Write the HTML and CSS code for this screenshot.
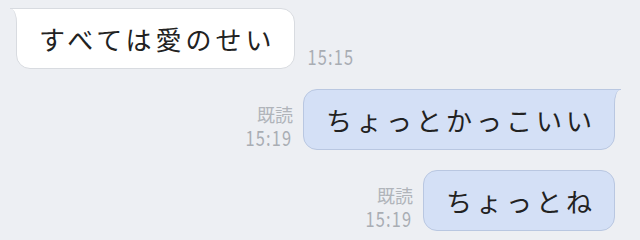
FILE: index.html
```html
<!DOCTYPE html>
<html>
<head>
    <meta charset="utf-8">
    <title>トーク</title>
    <link rel="stylesheet" href="styles.css">
</head>
<body>
    <div class="chat">
        <div class="row row-in">
            <div class="bubble bubble-in tail-left">すべては愛のせい</div>
            <div class="meta">
                <div class="time">15:15</div>
            </div>
        </div>
        <div class="row row-out">
            <div class="meta meta-out">
                <div class="read">既読</div>
                <div class="time">15:19</div>
            </div>
            <div class="bubble bubble-out tail-right">ちょっとかっこいい</div>
        </div>
        <div class="row row-out">
            <div class="meta meta-out">
                <div class="read">既読</div>
                <div class="time">15:19</div>
            </div>
            <div class="bubble bubble-out">ちょっとね</div>
        </div>
    </div>
</body>
</html>
```

FILE: styles.css
```css
body {
    margin: 0;
    background-color: #edeff3;
    font-family: "Noto Sans CJK JP", "Noto Sans", sans-serif;
}

.chat {
    display: flex;
    flex-direction: column;
    gap: 20px;
    padding: 8px 25px 0 16px;
}

.row {
    display: flex;
    align-items: flex-end;
    gap: 12px;
}

.row-out {
    justify-content: flex-end;
    gap: 10px;
}

.bubble {
    position: relative;
    height: 61px;
    line-height: 59px;
    padding: 0 18px 0 22px;
    font-size: 26px;
    letter-spacing: 4px;
    color: #222;
    border-radius: 14px;
    box-sizing: border-box;
    white-space: nowrap;
}

.bubble-in {
    background-color: #fff;
    border: 1px solid #d8dbe0;
    border-top-left-radius: 0;
}

.bubble-out {
    background-color: #d4e0f6;
    border: 1px solid #b9c7e1;
}

.tail-left::before,
.tail-right::before {
    content: "";
    position: absolute;
    top: -1px;
    width: 8px;
    height: 14px;
    border-top: 1px solid;
}

.tail-left::after,
.tail-right::after {
    content: "";
    position: absolute;
    top: 0;
    width: 6px;
    height: 14px;
    background-color: #edeff3;
}

.tail-left::before {
    left: -7px;
    background-color: #fff;
    border-top-color: #d8dbe0;
}

.tail-left::after {
    left: -7px;
    border-right: 1px solid #d8dbe0;
    border-top-right-radius: 6px 14px;
}

.tail-right {
    border-top-right-radius: 0;
}

.tail-right::before {
    right: -7px;
    background-color: #d4e0f6;
    border-top-color: #b9c7e1;
}

.tail-right::after {
    right: -7px;
    border-left: 1px solid #b9c7e1;
    border-top-left-radius: 6px 14px;
}

.meta {
    display: flex;
    flex-direction: column;
    gap: 1px;
    padding-bottom: 2px;
    color: #a9adb3;
}

.meta-out {
    align-items: flex-end;
}

.read {
    font-size: 18px;
    line-height: 22px;
    color: #b0b4ba;
}

/* condensed digits like the app's clock font */
.time {
    font-size: 21px;
    line-height: 22px;
    letter-spacing: 1.5px;
    margin: 0 -6px;
    transform: scaleX(0.78);
}
```
